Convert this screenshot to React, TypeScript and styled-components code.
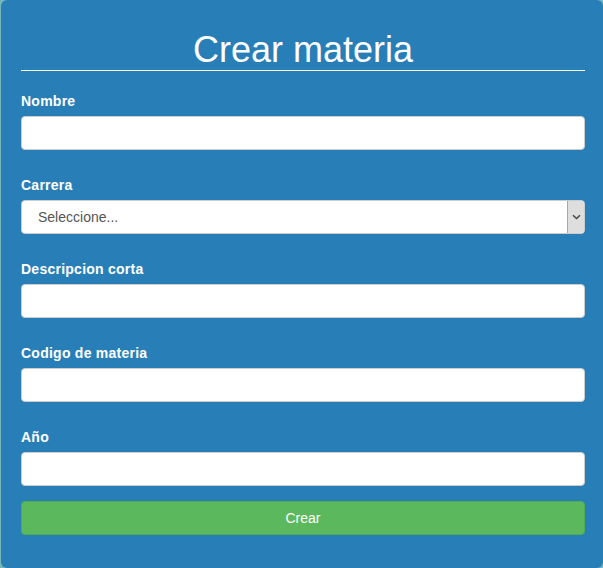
import React from "react";
import styled, { createGlobalStyle } from "styled-components";

const Global = createGlobalStyle`
  html, body { margin: 0; padding: 0; background: #79b6bb; }
  body { font-family: "Liberation Sans", Arial, sans-serif; font-size: 14px; color: #333; }
  * { box-sizing: border-box; }
`;

const Panel = styled.div`
  margin-left: 1px;
  width: 602px;
  height: 568px;
  background: #287fb8;
  border-radius: 6px;
  padding: 30px 18px 32px 20px;
`;

const Title = styled.h1`
  margin: 0 0 20px;
  font-size: 36px;
  font-weight: 400;
  line-height: 40px;
  height: 41px;
  color: #fff;
  text-align: center;
  border-bottom: 1px solid #fff;
`;

const Form = styled.form`
  display: flex;
  flex-direction: column;
`;

const Group = styled.div<{ $last?: boolean }>`
  display: flex;
  flex-direction: column;
  margin-bottom: ${(p) => (p.$last ? 15 : 25)}px;
`;

const Label = styled.label`
  display: block;
  font-weight: 700;
  font-size: 14px;
  line-height: 20px;
  letter-spacing: 0.25px;
  color: #fff;
  margin-bottom: 5px;
`;

const Input = styled.input`
  height: 34px;
  width: 100%;
  border: 1px solid #ccc;
  border-radius: 4px;
  background: #fff;
  padding: 6px 12px;
  font-family: inherit;
  font-size: 14px;
  color: #555;
  outline: none;
`;

const SelectWrap = styled.div`
  position: relative;
  height: 34px;
`;

const Select = styled.select`
  appearance: none;
  -webkit-appearance: none;
  height: 34px;
  width: 100%;
  border: 1px solid #ccc;
  border-radius: 4px;
  background: #fff;
  padding: 6px 12px 6px 16px;
  font-family: inherit;
  font-size: 14px;
  color: #555;
  outline: none;
`;

const Arrow = styled.span`
  position: absolute;
  top: 1px;
  right: 1px;
  bottom: 1px;
  width: 17px;
  background: #dedede;
  border-left: 1px solid #a9a9a9;
  border-radius: 0 3px 3px 0;
  display: flex;
  align-items: center;
  justify-content: center;
  pointer-events: none;
`;

const Button = styled.button`
  height: 34px;
  width: 100%;
  background: #5cb85c;
  border: 1px solid #4cae4c;
  border-radius: 4px;
  color: #fff;
  font-family: inherit;
  font-size: 14px;
  line-height: 20px;
  cursor: pointer;
`;

export default function App() {
  return (
    <>
      <Global />
      <Panel>
        <Title>Crear materia</Title>
        <Form onSubmit={(e) => e.preventDefault()}>
          <Group>
            <Label>Nombre</Label>
            <Input type="text" />
          </Group>
          <Group>
            <Label>Carrera</Label>
            <SelectWrap>
              <Select defaultValue="">
                <option value="">Seleccione...</option>
              </Select>
              <Arrow>
                <svg width="9" height="6" viewBox="0 0 9 6">
                  <path d="M1 1.2 L4.5 4.6 L8 1.2" fill="none" stroke="#444" strokeWidth="1.4" />
                </svg>
              </Arrow>
            </SelectWrap>
          </Group>
          <Group>
            <Label>Descripcion corta</Label>
            <Input type="text" />
          </Group>
          <Group>
            <Label>Codigo de materia</Label>
            <Input type="text" />
          </Group>
          <Group $last>
            <Label>Año</Label>
            <Input type="text" />
          </Group>
          <Button type="submit">Crear</Button>
        </Form>
      </Panel>
    </>
  );
}
